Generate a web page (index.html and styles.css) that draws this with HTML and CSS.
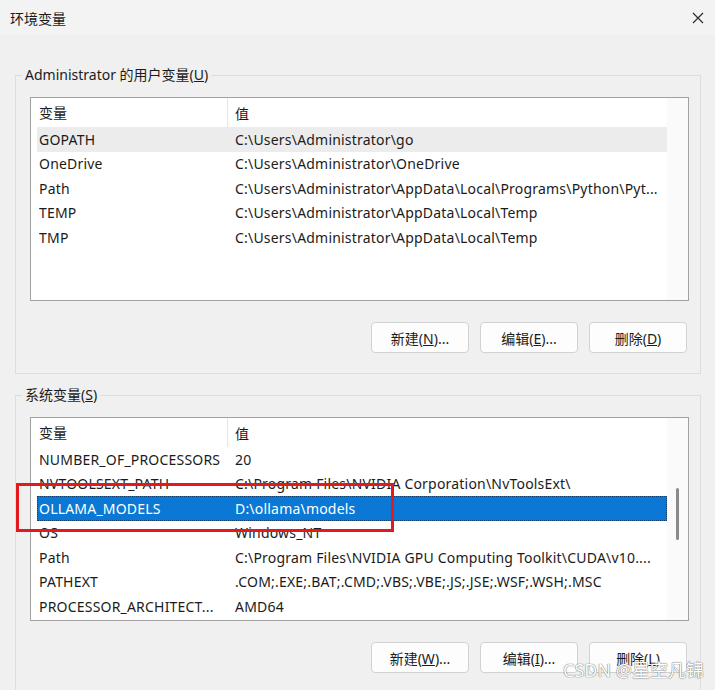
FILE: index.html
```html
<!DOCTYPE html>
<html lang="zh-CN">
<head>
  <meta charset="utf-8">
  <title>环境变量</title>
  <link rel="stylesheet" href="styles.css">
</head>
<body>
  <div class="titlebar">
    <span class="title">环境变量</span>
    <button class="close-btn" aria-label="关闭">
      <svg width="12" height="12" viewBox="0 0 12 12">
        <path d="M1 1 L11 11 M11 1 L1 11" stroke="#2b2b2b" stroke-width="1.2" fill="none"/>
      </svg>
    </button>
  </div>

  <!-- 用户变量 -->
  <fieldset class="group group-user">
    <legend>Administrator 的用户变量(<u>U</u>)</legend>
    <div class="var-list">
      <div class="list-body">
        <div class="list-head"><span class="head-name">变量</span><span class="head-value">值</span></div>
        <div class="row row-hover"><span>GOPATH</span><span>C:\Users\Administrator\go</span></div>
        <div class="row"><span>OneDrive</span><span>C:\Users\Administrator\OneDrive</span></div>
        <div class="row"><span>Path</span><span>C:\Users\Administrator\AppData\Local\Programs\Python\Pyt...</span></div>
        <div class="row"><span>TEMP</span><span>C:\Users\Administrator\AppData\Local\Temp</span></div>
        <div class="row"><span>TMP</span><span>C:\Users\Administrator\AppData\Local\Temp</span></div>
      </div>
      <div class="scroll-track"></div>
    </div>
    <div class="buttons">
      <button class="dlg-btn">新建(<u>N</u>)...</button>
      <button class="dlg-btn">编辑(<u>E</u>)...</button>
      <button class="dlg-btn">删除(<u>D</u>)</button>
    </div>
  </fieldset>

  <!-- 系统变量 -->
  <fieldset class="group group-system">
    <legend>系统变量(<u>S</u>)</legend>
    <div class="var-list">
      <div class="list-body">
        <div class="list-head"><span class="head-name">变量</span><span class="head-value">值</span></div>
        <div class="row"><span>NUMBER_OF_PROCESSORS</span><span>20</span></div>
        <div class="row"><span>NVTOOLSEXT_PATH</span><span>C:\Program Files\NVIDIA Corporation\NvToolsExt\</span></div>
        <div class="row row-selected"><span>OLLAMA_MODELS</span><span>D:\ollama\models</span></div>
        <div class="row"><span>OS</span><span>Windows_NT</span></div>
        <div class="row"><span>Path</span><span>C:\Program Files\NVIDIA GPU Computing Toolkit\CUDA\v10....</span></div>
        <div class="row"><span>PATHEXT</span><span>.COM;.EXE;.BAT;.CMD;.VBS;.VBE;.JS;.JSE;.WSF;.WSH;.MSC</span></div>
        <div class="row"><span>PROCESSOR_ARCHITECT...</span><span>AMD64</span></div>
      </div>
      <div class="scroll-track">
        <div class="scroll-thumb"></div>
      </div>
    </div>
    <div class="buttons">
      <button class="dlg-btn">新建(<u>W</u>)...</button>
      <button class="dlg-btn">编辑(<u>I</u>)...</button>
      <button class="dlg-btn">删除(<u>L</u>)</button>
    </div>
  </fieldset>

  <!-- 标注框 -->
  <div class="mark-box"></div>
  <div class="watermark">CSDN @星空凡锦</div>
</body>
</html>
```

FILE: styles.css
```css
html, body {
  margin: 0;
  padding: 0;
}

body {
  width: 715px;
  height: 690px;
  overflow: hidden;
  position: relative;
  background: #f0f0f0;
  color: #1b1b1b;
  font-family: "Noto Sans", "Noto Sans CJK SC", sans-serif;
  font-size: 14px;
}

/* -------------- 标题栏 -------------- */
.titlebar {
  height: 35px;
  display: flex;
  align-items: center;
  justify-content: space-between;
  padding: 0 11px 0 10px;
  background: #f3f3f3;
}

.title {
  font-size: 14px;
}

.close-btn {
  width: 12px;
  height: 12px;
  padding: 0;
  border: none;
  background: none;
  display: flex;
}

/* -------------- 分组框 -------------- */
.group {
  margin: 0 14px 0 15px;
  padding: 12px 11px 20px 14px;
  border: 1px solid #dddddd;
  min-width: 0;
}

.group-user {
  margin-top: 30px;
}

.group-system {
  margin-top: 11px;
  padding-bottom: 40px;
}

.group legend {
  margin-left: -8px;
  padding: 0 3px;
  line-height: 20px;
}

/* -------------- 列表 -------------- */
.var-list {
  height: 204px;
  box-sizing: border-box;
  border: 1px solid #a2a2a2;
  background: #fff;
  display: flex;
}

.list-body {
  flex: 1;
  min-width: 0;
  padding-left: 6px;
}

.list-head {
  height: 29px;
  display: flex;
  align-items: center;
  padding-left: 2px;
}

.head-name {
  width: 188px;
  border-right: 1px solid #e6e6e6;
  line-height: 29px;
}

.head-value {
  padding-left: 7px;
}

.row {
  height: 24.5px;
  display: grid;
  grid-template-columns: 196px 1fr;
  align-items: center;
  padding-left: 2px;
  white-space: nowrap;
  letter-spacing: 0.2px;
}

.row span {
  overflow: hidden;
}

.row-hover {
  background: #ececec;
}

.row-selected {
  background: #0a78d4;
  color: #fff;
  outline: 1px dotted #0d3f70;
  outline-offset: -1px;
}

.scroll-track {
  width: 21px;
  background: #fafafa;
  display: flex;
  justify-content: center;
}

.scroll-thumb {
  width: 3px;
  height: 52px;
  margin-top: 70px;
  border-radius: 2px;
  background: #8a8a8a;
}

/* -------------- 按钮 -------------- */
.buttons {
  display: flex;
  justify-content: flex-end;
  gap: 11px;
  margin-top: 21px;
  padding-right: 2px;
}

.dlg-btn {
  width: 98px;
  height: 31px;
  border: 1px solid #d2d2d2;
  border-radius: 4px;
  background: #fdfdfd;
  color: #1b1b1b;
  font-family: "Noto Sans", "Noto Sans CJK SC", sans-serif;
  font-size: 14px;
  padding: 0;
}

/* -------------- 标注 & 水印 -------------- */
.mark-box {
  position: absolute;
  left: 16px;
  top: 483px;
  width: 378px;
  height: 49px;
  box-sizing: border-box;
  border: 3px solid #e2191f;
}

.watermark {
  position: absolute;
  left: 563px;
  top: 656px;
  font-size: 18px;
  color: #fff;
  text-shadow: 0 0 1px #6a6a6a, 0 0 1px #6a6a6a;
  white-space: nowrap;
}
```
